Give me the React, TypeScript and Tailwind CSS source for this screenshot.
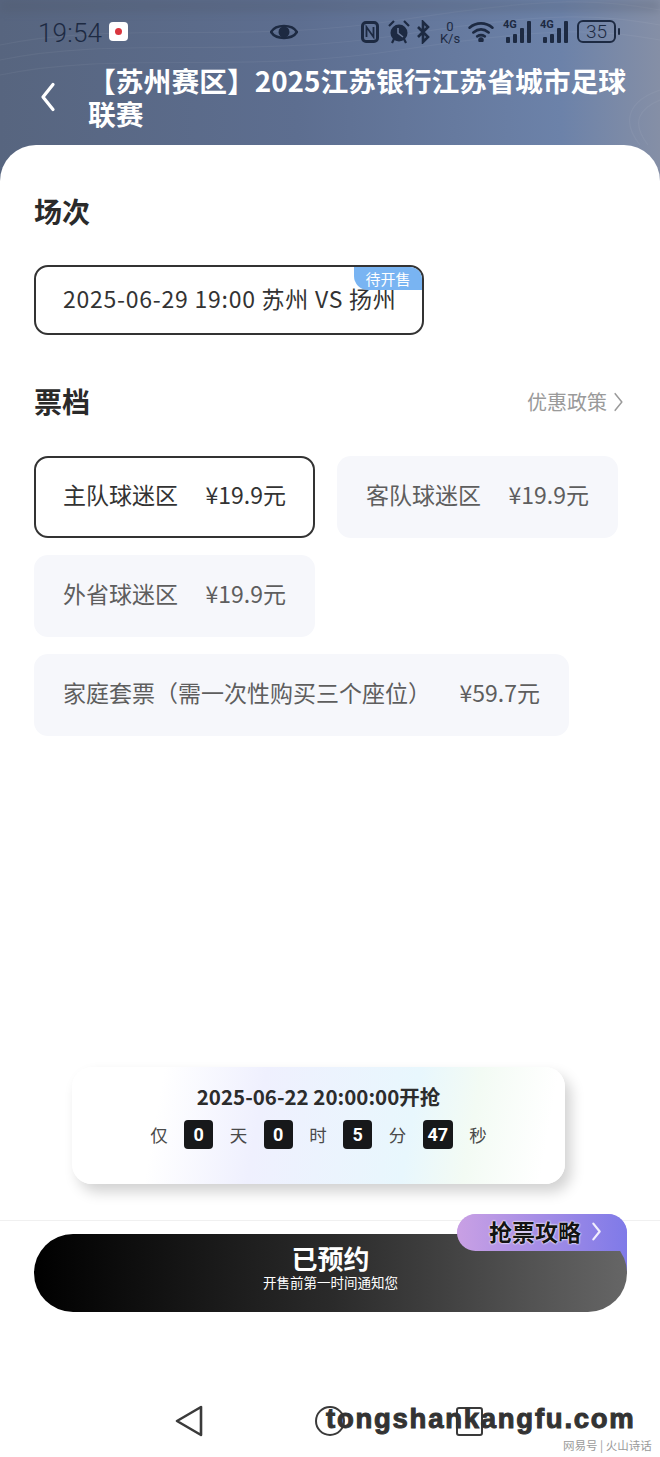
import React from "react";

const CJK = "font-['Noto_Sans_CJK_SC','Noto_Sans',sans-serif]";

function Chevron({ className, w = 2, left }: { className?: string; w?: number; left?: boolean }) {
  return (
    <svg viewBox="0 0 12 24" className={className} fill="none" stroke="currentColor" strokeWidth={w} strokeLinecap="round" strokeLinejoin="round">
      <path d={left ? "M10 2 L2 12 L10 22" : "M2 2 L10 12 L2 22"} />
    </svg>
  );
}

function Signal() {
  return (
    <div className="relative w-[30px] h-[24px]">
      <span className="absolute left-0 -top-[1px] text-[11px] leading-[12px] font-bold text-[#1d2a42] font-['Roboto',sans-serif]">4G</span>
      <svg viewBox="0 0 30 24" className="absolute inset-0 w-[30px] h-[24px]" fill="#1d2a42">
        <rect x="3" y="17" width="4" height="6" rx="1" />
        <rect x="10" y="14" width="4" height="9" rx="1" />
        <rect x="17" y="8" width="4" height="15" rx="1" />
        <rect x="24" y="1" width="4" height="22" rx="1" />
      </svg>
    </div>
  );
}

function StatusBar() {
  return (
    <div className="h-[64px] pt-[19px] pl-[38px] flex items-start text-[#1d2a42]">
      <span className="text-[26px] leading-[28px] font-['Roboto',sans-serif] font-light w-[64px] tracking-[0.2px]">19:54</span>
      <div className="ml-[7px] mt-[3px] w-[19px] h-[19px] rounded-[4px] bg-white flex items-center justify-center">
        <span className="w-[7px] h-[7px] rounded-full bg-[#d9363e]" />
      </div>
      <svg viewBox="0 0 28 20" className="ml-[142px] mt-[3px] w-[28px] h-[20px]">
        <path d="M1 10 C6 2 22 2 27 10 C22 18 6 18 1 10 Z" fill="none" stroke="#1d2a42" strokeWidth="2.5" />
        <circle cx="14" cy="10" r="5.5" fill="#1d2a42" />
      </svg>
      <svg viewBox="0 0 18 22" className="ml-[63px] mt-[2px] w-[18px] h-[22px]" fill="none" stroke="#1d2a42">
        <rect x="1.5" y="1.5" width="15" height="19" rx="3.5" strokeWidth="3" />
        <path d="M5.500 16 V6 L12.500 16 V6" strokeWidth="1.800" />
      </svg>
      <svg viewBox="0 0 22 24" className="ml-[9px] mt-[1px] w-[22px] h-[24px]" fill="#1d2a42">
        <circle cx="11" cy="13" r="8.500" />
        <path d="M10 8 V13 L15 17" stroke="#6d7c9b" strokeWidth="1.600" fill="none" />
        <path d="M1 6 L6 1 M21 6 L16 1 M4 23 L6 19 M18 23 L16 19" stroke="#1d2a42" strokeWidth="2.200" />
      </svg>
      <svg viewBox="0 0 14 24" className="ml-[6px] mt-[1px] w-[14px] h-[24px]" fill="none" stroke="#1d2a42" strokeWidth="2.600">
        <path d="M2 7 L12 17 L7 22 V2 L12 7 L2 17" />
      </svg>
      <div className="ml-[8px] w-[24px] flex flex-col items-center text-[13px] leading-[12px] font-['Roboto',sans-serif] mt-[2px]">
        <span>0</span>
        <span>K/s</span>
      </div>
      <svg viewBox="0 0 28 22" className="ml-[5px] mt-[2px] w-[28px] h-[21px]" fill="none" stroke="#1d2a42" strokeWidth="2.800" strokeLinecap="round">
        <path d="M2 7 C9 1 19 1 26 7" />
        <path d="M6 12 C11 8 17 8 22 12" />
        <path d="M10 16 C12.500 14.500 15.500 14.500 18 16" />
        <circle cx="14" cy="20" r="1.500" fill="#1d2a42" />
      </svg>
      <div className="ml-[8px] mt-[1px]"><Signal /></div>
      <div className="ml-[7px] mt-[1px]"><Signal /></div>
      <div className="ml-[7px] mt-[1px] w-[39px] h-[23px] rounded-[6px] border-2 border-[#1d2a42] flex items-center justify-center text-[19px] leading-none font-['Roboto',sans-serif] font-light">35</div>
      <span className="ml-[2px] mt-[9px] w-[2px] h-[7px] rounded-[1px] bg-[#1d2a42]" />
    </div>
  );
}

function SectionTitle({ children }: { children: React.ReactNode }) {
  return <h2 className="text-[28px] leading-[36px] font-bold text-[#2a2a2a]">{children}</h2>;
}

function Ticket({ name, price, active }: { name: string; price: string; active?: boolean }) {
  return (
    <div
      className={`h-[82px] rounded-[14px] flex items-center justify-between pb-[6px] text-[23px] ${
        active ? "px-[27px] border-2 border-[#333333] text-[#333333] bg-white" : "px-[29px] bg-[#f6f7fb] text-[#5e5e5e]"
      }`}
    >
      <span>{name}</span>
      <span>{price}</span>
    </div>
  );
}

function Unit({ c }: { c: string }) {
  return <span className="text-[17.5px] leading-[28px] text-[#4a4a4a]">{c}</span>;
}
function Num({ c, wide }: { c: string; wide?: boolean }) {
  return (
    <span className={`${wide ? "w-[30px]" : "w-[29px]"} h-[29px] rounded-[4px] bg-[#17181a] text-white flex items-center justify-center text-[18px] font-bold font-['Roboto',sans-serif]`}>
      {c}
    </span>
  );
}

export default function App() {
  return (
    <div className={`${CJK} relative w-[660px] h-[1457px] overflow-hidden bg-white`}>
      <header className="relative h-[185px] bg-[linear-gradient(90deg,#57657f_0%,#5d6e90_45%,#6c82a9_85%,#858fa6_100%)]">
        <svg viewBox="0 0 660 185" className="absolute inset-0 w-[660px] h-[185px]" fill="none" stroke="#ffffff" strokeOpacity="0.05" strokeWidth="1.200">
          <path d="M0 45 C120 20 240 45 400 20 S600 0 660 10" />
          <path d="M0 60 C120 35 240 60 400 35 S600 15 660 25" />
          <path d="M0 75 C120 50 240 75 400 50 S600 30 660 40" />
          <path d="M640 145 C620 120 630 100 660 90" />
          <path d="M648 145 C630 122 640 108 660 100" />
        </svg>
        <div className="absolute left-0 right-0 top-0 h-[12px] bg-[#4d5565] opacity-25 blur-[4px]" />
        <div className="relative">
          <StatusBar />
          <div className="flex items-center">
            <Chevron left className="ml-[40px] w-[16px] h-[30px] text-white" w={2.6} />
            <h1 className="ml-[32px] w-[545px] text-[27.8px] leading-[33px] font-bold text-white">
              【苏州赛区】2025江苏银行江苏省城市足球联赛
            </h1>
          </div>
        </div>
      </header>

      <main className="-mt-[40px] relative h-[1075px] rounded-t-[36px] bg-white px-[34px] pt-[48px] flex flex-col">
        <SectionTitle>场次</SectionTitle>
        <div className="relative mt-[36px] w-[390px] h-[70px] rounded-[14px] border-2 border-[#333333] flex items-center pl-[27px] pb-[4px] text-[23px] tracking-[0.75px] text-[#333333] overflow-hidden whitespace-nowrap">
          2025-06-29 19:00 苏州 VS 扬州
          <span className="absolute right-0 top-0 w-[68px] h-[23px] bg-[#79b4f2] rounded-bl-[14px] text-white text-[15px] tracking-normal leading-[23px] text-center">待开售</span>
        </div>

        <div className="mt-[48px] flex items-center justify-between pr-[2px]">
          <SectionTitle>票档</SectionTitle>
          <div className="mt-[2px] flex items-center gap-[6px] text-[20px] text-[#9a9a9a]">
            优惠政策
            <Chevron className="w-[11px] h-[20px]" w={1.8} />
          </div>
        </div>

        <div className="mt-[37px] flex flex-wrap gap-x-[22px] gap-y-[17px] w-[590px]">
          <div className="w-[281px]"><Ticket name="主队球迷区" price="¥19.9元" active /></div>
          <div className="w-[281px]"><Ticket name="客队球迷区" price="¥19.9元" /></div>
          <div className="w-[281px]"><Ticket name="外省球迷区" price="¥19.9元" /></div>
          <div className="w-[535px]"><Ticket name="家庭套票（需一次性购买三个座位）" price="¥59.7元" /></div>
        </div>
      </main>

      {/* floating countdown */}
      <div className="absolute left-[72px] top-[1067px] w-[493px] h-[117px] rounded-[20px] shadow-[6px_8px_14px_rgba(0,0,0,0.18)] bg-[linear-gradient(100deg,#ffffff_18%,#eff0fe_38%,#e8f7fd_68%,#f3fbf4_80%,#ffffff_95%)] flex flex-col items-center pt-[15px]">
        <div className="text-[20.5px] leading-[28px] font-bold text-[#2c2c2c]">2025-06-22 20:00:00开抢</div>
        <div className="mt-[10px] flex items-center gap-[16.5px]">
          <Unit c="仅" /><Num c="0" /><Unit c="天" /><Num c="0" /><Unit c="时" /><Num c="5" /><Unit c="分" /><Num c="47" wide /><Unit c="秒" />
        </div>
      </div>

      {/* bottom action */}
      <div className="absolute left-0 right-0 top-[1220px] border-t border-[#f0f0f0] h-[110px]">
        <div className="absolute left-[457px] -top-[7px] w-[170px] h-[60px] rounded-t-[20px] bg-[linear-gradient(90deg,#c9a0e4_0%,#7f7ae8_100%)]" />
        <div className="absolute left-[34px] top-[13px] w-[593px] h-[78px] rounded-[39px] bg-[linear-gradient(90deg,#000000_0%,#2a2a2a_50%,#666666_100%)] flex flex-col items-center justify-center pb-[12px] text-white">
          <span className="text-[26px] leading-[26px] font-bold">已预约</span>
          <span className="mt-[3px] text-[13.5px] leading-[16px]">开售前第一时间通知您</span>
        </div>
        <div className="absolute left-[457px] -top-[7px] w-[170px] h-[37px] rounded-t-[20px] rounded-bl-[20px] bg-[linear-gradient(90deg,#c9a0e4_0%,#7f7ae8_100%)] flex items-center pl-[32px] pb-[3px]">
          <span className="text-[23px] font-bold text-[#141414] whitespace-nowrap [text-shadow:0_0_2px_#ffffff,0_0_2px_#ffffff]">抢票攻略</span>
          <Chevron className="ml-[10px] w-[11px] h-[19px] text-[#f1eefd]" w={2.8} />
        </div>
      </div>

      {/* system nav */}
      <svg viewBox="0 0 28 32" className="absolute left-[175px] top-[1405px] w-[28px] h-[32px]" fill="none" stroke="#3a3a3a" strokeWidth="2.6" strokeLinejoin="round">
        <path d="M26 2 V30 L2 16 Z" />
      </svg>
      <span className="absolute left-[315px] top-[1406px] w-[30px] h-[30px] rounded-full border-[2.5px] border-[#3a3a3a]" />
      <span className="absolute left-[456px] top-[1407px] w-[27px] h-[29px] rounded-[3px] border-[2.5px] border-[#3a3a3a]" />

      {/* watermarks */}
      <span className="absolute left-[326px] top-[1402px] text-[27.5px] leading-[34px] tracking-[1.75px] font-bold text-[#333333] font-['Liberation_Sans',sans-serif] [-webkit-text-stroke:1px_#333333] whitespace-nowrap">
        tongshankangfu.com
      </span>
      <span className="absolute left-[563px] top-[1437px] text-[11.5px] leading-[16px] text-[#9a9a9a] whitespace-nowrap">网易号 | 火山诗话</span>
    </div>
  );
}
